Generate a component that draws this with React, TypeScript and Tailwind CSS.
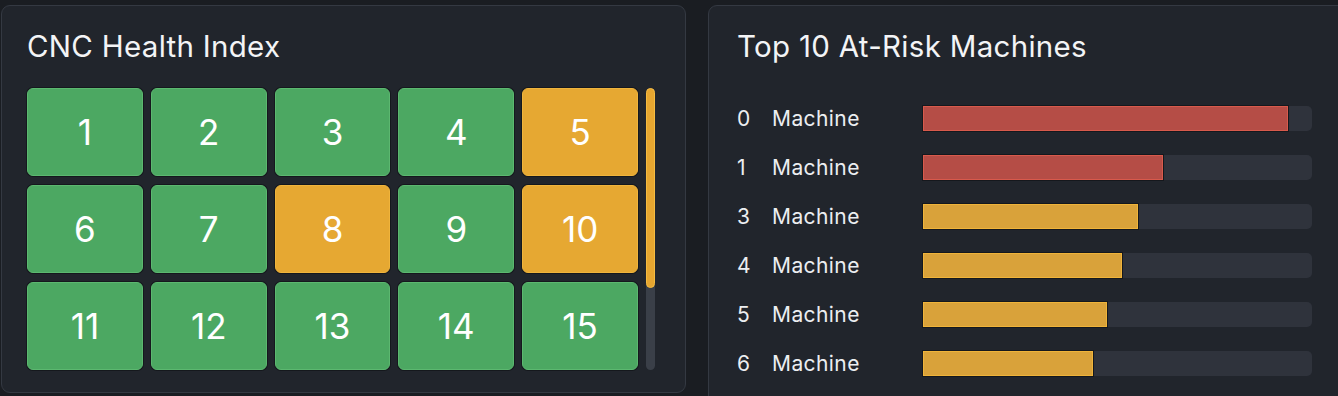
const tiles = [
  { id: 1, status: "ok" },
  { id: 2, status: "ok" },
  { id: 3, status: "ok" },
  { id: 4, status: "ok" },
  { id: 5, status: "warn" },
  { id: 6, status: "ok" },
  { id: 7, status: "ok" },
  { id: 8, status: "warn" },
  { id: 9, status: "ok" },
  { id: 10, status: "warn" },
  { id: 11, status: "ok" },
  { id: 12, status: "ok" },
  { id: 13, status: "ok" },
  { id: 14, status: "ok" },
  { id: 15, status: "ok" },
];

const risks = [
  { id: 0, risk: 93.8, level: "high" },
  { id: 1, risk: 61.7, level: "high" },
  { id: 3, risk: 55.3, level: "mid" },
  { id: 4, risk: 51.2, level: "mid" },
  { id: 5, risk: 47.3, level: "mid" },
  { id: 6, risk: 43.7, level: "mid" },
];

const font = { fontFamily: "Inter, 'Noto Sans', sans-serif" };

const HealthTile = ({ id, status }: { id: number; status: string }) => (
  <div
    className={`flex h-[88px] items-center justify-center rounded-[6px] border text-[35px] text-white shadow-[0_0_0_1px_#15181d] ${
      status === "warn" ? "border-[#f0b43c] bg-[#e6a832]" : "border-[#5cb870] bg-[#4ca862]"
    }`}
  >
    {id}
  </div>
);

const RiskRow = ({ id, risk, level }: { id: number; risk: number; level: string }) => (
  <div className="flex h-[49px] items-center text-[21px] tracking-[0.02em] text-[#eceef1]">
    <span className="w-[35px]">{id}</span>
    <span className="w-[151px]">Machine</span>
    <div className="h-[25px] flex-1 rounded-[5px] bg-[#2f333c]">
      <div
        className={`h-full border shadow-[0_0_0_1px_#15181d] ${
          level === "high" ? "border-[#d85a4c] bg-[#b54d46]" : "border-[#f0b43a] bg-[#d9a23a]"
        }`}
        style={{ width: `${risk}%` }}
      />
    </div>
  </div>
);

export default function App() {
  return (
    <div className="flex h-[396px] gap-[22px] overflow-hidden bg-[#1a1d22] pl-px pt-[5px]" style={font}>
      <div className="flex h-[388px] w-[685px] shrink-0 flex-col rounded-[9px] border border-[#343942] bg-[#21252c] pl-[25px] pt-[20px]">
        <h2 className="text-[29.5px] leading-[40px] tracking-[0.01em] text-[#f3f4f6]">CNC Health Index</h2>
        <div className="mt-[22px] flex gap-[8px]">
          <div className="grid w-[611px] grid-cols-5 gap-x-[8px] gap-y-[9px]">
            {tiles.map((t) => (
              <HealthTile key={t.id} {...t} />
            ))}
          </div>
          <div className="flex h-[282px] w-[9px] flex-col rounded-full bg-[#3a3f48]">
            <div className="h-[200px] rounded-full border border-[#f5bb40] bg-[#e6a630]" />
          </div>
        </div>
      </div>
      <div className="h-[400px] w-[640px] shrink-0 rounded-[9px] border border-[#343942] bg-[#21252c] pl-[28px] pr-[35px] pt-[20px]">
        <h2 className="text-[29.5px] leading-[40px] tracking-[0.01em] text-[#f3f4f6]">Top 10 At-Risk Machines</h2>
        <div className="mt-[28px] flex flex-col">
          {risks.map((r) => (
            <RiskRow key={r.id} {...r} />
          ))}
        </div>
      </div>
    </div>
  );
}
